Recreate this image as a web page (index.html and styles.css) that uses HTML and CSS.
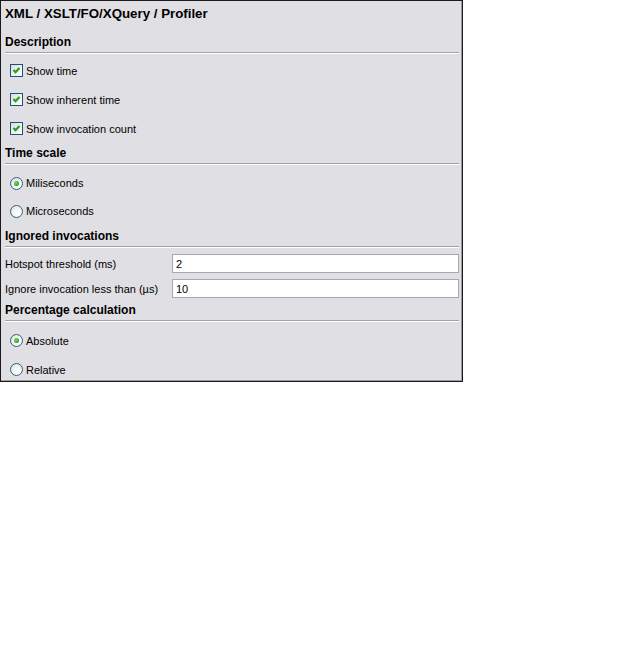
FILE: index.html
```html
<!DOCTYPE html>
<html>
<head>
<meta charset="utf-8">
<link rel="stylesheet" href="styles.css">
</head>
<body>
<div class="panel">
  <div class="title">XML / XSLT/FO/XQuery / Profiler</div>

  <div class="heading">Description</div>
  <div class="group checks">
    <div class="row"><span class="cb"><svg viewBox="0 0 11 11" width="11" height="11"><path d="M2.5 5 L4.5 7.2 L8.5 3" fill="none" stroke="#21a121" stroke-width="2.2"/></svg></span><span>Show time</span></div>
    <div class="row"><span class="cb"><svg viewBox="0 0 11 11" width="11" height="11"><path d="M2.5 5 L4.5 7.2 L8.5 3" fill="none" stroke="#21a121" stroke-width="2.2"/></svg></span><span>Show inherent time</span></div>
    <div class="row"><span class="cb"><svg viewBox="0 0 11 11" width="11" height="11"><path d="M2.5 5 L4.5 7.2 L8.5 3" fill="none" stroke="#21a121" stroke-width="2.2"/></svg></span><span>Show invocation count</span></div>
  </div>

  <div class="heading">Time scale</div>
  <div class="group radios">
    <div class="row r28"><span class="rb on"></span><span>Miliseconds</span></div>
    <div class="row r28"><span class="rb"></span><span>Microseconds</span></div>
  </div>

  <div class="heading h-ign">Ignored invocations</div>
  <div class="group fields">
    <div class="field"><label>Hotspot threshold (ms)</label><input class="txt" type="text" value="2"></div>
    <div class="field"><label>Ignore invocation less than (µs)</label><input class="txt" type="text" value="10"></div>
  </div>

  <div class="heading h-pct">Percentage calculation</div>
  <div class="group radios2">
    <div class="row"><span class="rb on"></span><span>Absolute</span></div>
    <div class="row"><span class="rb"></span><span>Relative</span></div>
  </div>
</div>
</body>
</html>
```

FILE: styles.css
```css
html, body {
  margin: 0;
  padding: 0;
  background: #ffffff;
}

.panel {
  box-sizing: border-box;
  width: 463px;
  height: 382px;
  overflow: hidden;
  background: #e0dfe3;
  border: 1px solid #1a1a1a;
  box-shadow: inset -1px -1px 0 #9d9da1;
  padding: 0 3px 0 4px;
  font-family: Tahoma, "Liberation Sans", Arial, sans-serif;
  font-size: 11px;
  color: #000;
  display: flex;
  flex-direction: column;
}

.title {
  height: 25px;
  line-height: 25px;
  font-size: 13.3px;
  font-weight: bold;
  margin-bottom: 6px;
  flex: none;
}

.heading {
  flex: none;
  height: 20px;
  line-height: 20px;
  font-size: 12px;
  font-weight: bold;
  border-bottom: 1px solid #a3a3a7;
  box-shadow: 0 1px 0 #ffffff;
}

.group {
  flex: none;
  display: flex;
  flex-direction: column;
  padding-left: 5px;
}

.checks { margin-top: 3px; }
.radios { margin-top: 5px; }
.h-ign { margin-top: 1px; }
.fields { margin-top: 7px; padding-left: 0; gap: 6px; }
.h-pct { margin-top: 2px; }
.radios2 { margin-top: 5px; }

.row {
  height: 29px;
  display: flex;
  align-items: center;
  gap: 3px;
}

.row.r28 { height: 28px; }

.cb {
  box-sizing: border-box;
  width: 13px;
  height: 13px;
  border: 1px solid #1c5180;
  background: linear-gradient(135deg, #dcdcd7 0%, #f4f4f0 60%, #ffffff 100%);
  display: inline-flex;
  align-items: center;
  justify-content: center;
  flex: none;
}

.cb svg {
  display: block;
}

.rb {
  box-sizing: border-box;
  width: 13px;
  height: 13px;
  border-radius: 50%;
  border: 1px solid #2c628b;
  background: radial-gradient(circle at 65% 65%, #ffffff 0%, #f2f2ee 50%, #d8d8d2 100%);
  position: relative;
  flex: none;
}

.rb.on::after {
  content: "";
  position: absolute;
  left: 3px;
  top: 3px;
  width: 5px;
  height: 5px;
  border-radius: 50%;
  background: radial-gradient(circle at 40% 40%, #7ede6e 0%, #21a121 70%);
}

.field {
  display: flex;
  align-items: center;
  height: 19px;
}

.field label {
  width: 167px;
  flex: none;
}

.txt {
  box-sizing: border-box;
  width: 288px;
  height: 19px;
  margin: 0;
  border: 1px solid #a5a8ad;
  background: #ffffff;
  padding: 0 3px;
  font-family: Tahoma, "Liberation Sans", Arial, sans-serif;
  font-size: 11px;
  color: #000;
  outline: none;
}
```
